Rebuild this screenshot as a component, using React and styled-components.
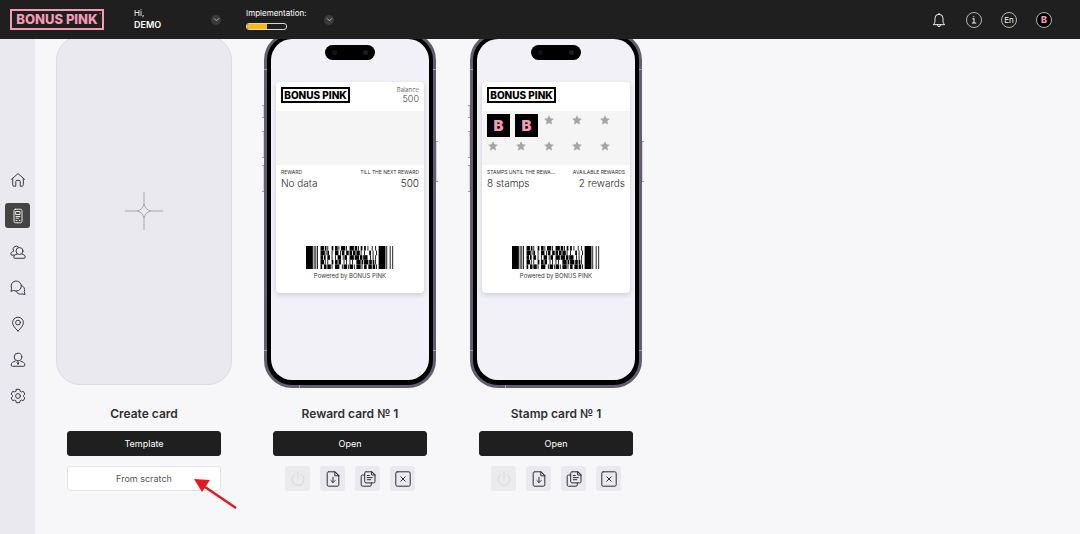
import React from "react";
import styled, { createGlobalStyle, css } from "styled-components";

const GlobalStyle = createGlobalStyle`
  *, *::before, *::after { box-sizing: border-box; }
  body {
    margin: 0;
    background: #f7f7fa;
    color: #2f2f33;
    font-family: Inter, "Liberation Sans", sans-serif;
    overflow-x: hidden;
  }
  button { font: inherit; color: inherit; padding: 0; border: 0; background: none; cursor: pointer; }
  a { color: inherit; text-decoration: none; }
  h2, p, dl, dt, dd, ul { margin: 0; padding: 0; }
  ul { list-style: none; }
`;

/* ---------- header ---------- */

const TopBar = styled.header`
  position: sticky;
  top: 0;
  z-index: 2;
  display: flex;
  align-items: center;
  height: 39px;
  padding: 0 28px 0 10px;
  background: #1f1f1f;
  color: #fff;
`;

const logoSizes = {
  large: css`
    width: 94px;
    height: 21px;
    font-size: 13px;
  `,
  small: css`
    width: 69px;
    height: 16px;
    font-size: 10px;
  `,
};

const LogoBox = styled.span`
  position: relative;
  display: flex;
  align-items: center;
  justify-content: center;
  border: 2px solid currentColor;
  color: ${(p) => p.$color};
  font-weight: 800;
  line-height: 1;
  white-space: nowrap;
  ${(p) => logoSizes[p.$size]}
`;

const TradeMark = styled.sup`
  position: absolute;
  top: 2px;
  right: 1px;
  font-size: 3px;
  line-height: 4px;
`;

const Account = styled.div`
  display: flex;
  align-items: center;
  justify-content: space-between;
  width: ${(p) => p.$width};
  margin-left: ${(p) => p.$gap};
`;

const AccountText = styled.div`
  display: grid;
  gap: ${(p) => p.$gap || "0"};
  padding-bottom: 2px;
  font-size: 8px;
  line-height: 12px;
`;

const AccountName = styled.strong`
  font-size: 9px;
  font-weight: 600;
`;

const Progress = styled.div`
  width: 41px;
  height: 7px;
  border: 1px solid #d8d8d8;
  border-radius: 3px;
`;

const ProgressFill = styled.div`
  height: 100%;
  border-radius: 2px 0 0 2px;
  background: #fdbb12;
`;

const Chevron = styled.button`
  display: grid;
  place-items: center;
  width: 10px;
  height: 10px;
  border-radius: 50%;
  background: #3b3b3b;
  color: #c4c4c4;
`;

const HeaderActions = styled.div`
  display: flex;
  gap: 19px;
  margin-left: auto;
`;

const RoundAction = styled.button`
  display: grid;
  place-items: center;
  width: 16px;
  height: 16px;
  border: ${(p) => (p.$ring ? "1px solid #b4b4b4" : "0")};
  border-radius: 50%;
  background: ${(p) => (p.$dark ? "#000" : "none")};
  color: ${(p) => (p.$dark ? "#f59ab5" : "#f0f0f0")};
  font-size: ${(p) => (p.$dark ? "9px" : "8px")};
  font-weight: ${(p) => (p.$dark ? 800 : 400)};
  line-height: 1;
`;

/* ---------- shell ---------- */

const Shell = styled.div`
  display: grid;
  grid-template-columns: 35px 1fr;
  min-height: calc(100vh - 39px);
`;

const Sidebar = styled.nav`
  display: flex;
  flex-direction: column;
  align-items: center;
  justify-content: center;
  gap: 11px;
  padding-top: 2px;
  background: #e9e9ef;
`;

const NavItem = styled.a`
  display: grid;
  place-items: center;
  width: 25px;
  height: 25px;
  border-radius: 3px;
  background: ${(p) => (p.$active ? "#444" : "none")};
  color: ${(p) => (p.$active ? "#e6e6e6" : "#3a3a42")};
`;

const Main = styled.main`
  display: flex;
  flex-wrap: wrap;
  align-content: flex-start;
  margin-top: -7px;
  padding: 0 6px;
`;

const Column = styled.section`
  display: flex;
  flex-direction: column;
  align-items: center;
  width: 206px;
`;

const Preview = styled.div`
  display: flex;
  justify-content: center;
  width: 100%;
  height: 356px;
`;

const NewCard = styled.button`
  display: grid;
  place-items: center;
  width: 176px;
  height: 349px;
  margin-top: 4px;
  border: 1px solid #dcdce2;
  border-radius: 24px;
  background: #e9e9ef;
`;

const ColumnTitle = styled.h2`
  margin-top: 15px;
  font-size: 12px;
  font-weight: 600;
  line-height: 22px;
`;

const Button = styled.button`
  width: 154px;
  height: 25px;
  margin-top: ${(p) => (p.$light ? "10px" : "6px")};
  border: 1px solid ${(p) => (p.$light ? "#e4e4e8" : "#1f1f1f")};
  border-radius: 3px;
  background: ${(p) => (p.$light ? "#fff" : "#1f1f1f")};
  color: ${(p) => (p.$light ? "#55555a" : "#fff")};
  font-size: 9px;
`;

const Pointed = styled.div`
  position: relative;
`;

const PointerArrow = styled.svg`
  position: absolute;
  top: 21px;
  left: 126px;
  pointer-events: none;
`;

const IconRow = styled.div`
  display: flex;
  gap: 10px;
  margin-top: 10px;
`;

const IconButton = styled.button`
  display: grid;
  place-items: center;
  width: 25px;
  height: 25px;
  border-radius: 3px;
  background: #e9e9ef;
  color: #2e2e34;

  &:disabled {
    background: #ebebed;
    color: #d9d9dc;
  }
`;

/* ---------- phone ---------- */

const Phone = styled.div`
  position: relative;
  width: 172px;
  height: 356px;
  border: 3px solid #645d70;
  border-radius: 28px;
  background: #000;
`;

const PhoneDetails = styled.svg`
  position: absolute;
  top: -3px;
  left: -5px;
  overflow: visible;
`;

const Screen = styled.div`
  display: flex;
  flex-direction: column;
  align-items: center;
  height: calc(100% - 9px);
  margin: 4px 4px 5px;
  padding-top: 6px;
  border-radius: 21px;
  background: #f1f1f7;
`;

const Island = styled.div`
  display: flex;
  align-items: center;
  justify-content: space-between;
  width: 50px;
  height: 15px;
  padding: 0 7px;
  border-radius: 8px;
  background: #000;
`;

const Lens = styled.span`
  width: 5px;
  height: 5px;
  border-radius: 50%;
  background: ${(p) => p.$tone};
`;

const WalletCard = styled.article`
  display: flex;
  flex-direction: column;
  width: 148px;
  height: 211px;
  margin-top: 22px;
  border-radius: 4px;
  background: #fff;
  box-shadow: 0 2px 5px rgba(40, 40, 70, 0.18);
`;

const CardHead = styled.div`
  display: flex;
  justify-content: space-between;
  height: 29px;
  padding: 5px 5px 0;
`;

const Balance = styled.dl`
  color: #3c3c3c;
  text-align: right;
  font-size: 9px;
  font-weight: 300;
  line-height: 11px;

  dt { font-size: 6px; line-height: 6px; }
`;

const Strip = styled.div`
  height: 54px;
  padding: 3px 0 0 5px;
  background: #f5f5f5;
`;

const Stamps = styled.ul`
  display: grid;
  grid-template-columns: repeat(5, 28px);
  grid-auto-rows: 26px;
`;

const Stamp = styled.li`
  display: grid;
  place-items: center;
  width: 23px;
  height: 23px;
  background: #000;
  color: #f59ab5;
  font-size: 15px;
  font-weight: 900;
  line-height: 1;
`;

const EmptyStamp = styled.li`
  padding: 1px;
  line-height: 0;
`;

const Fields = styled.dl`
  display: flex;
  justify-content: space-between;
  padding: 4px 5px 0;
  white-space: nowrap;
`;

const Field = styled.div`
  text-align: ${(p) => p.$align || "left"};

  dt { font-size: 5px; line-height: 6px; }
  dd { color: #2c2c2c; font-size: 10px; font-weight: 300; line-height: 16px; }
`;

const CodeBlock = styled.div`
  display: flex;
  flex-direction: column;
  align-items: center;
  gap: 3px;
  margin-top: auto;
  padding-bottom: 13px;
  color: #3c3c3c;
  font-size: 6px;
  line-height: 8px;
`;

/* ---------- drawings ---------- */

const Glyph = ({ size = 16, children, width = 1 }) => (
  <svg width={size} height={size} viewBox="0 0 16 16" fill="none" stroke="currentColor"
    strokeWidth={width} strokeLinecap="round" strokeLinejoin="round" aria-hidden="true">
    {children}
  </svg>
);

const icons = {
  bell: (
    <>
      <path d="M2.600 12.400c1-1 1.400-2 1.400-3.700V6.300a4 4 0 0 1 8 0v2.400c0 1.700.4 2.700 1.400 3.700z" />
      <path d="M6.600 12.600v.6a1.400 1.400 0 0 0 2.800 0v-.6M7.200 2.300a.8.8 0 0 1 1.600 0" />
    </>
  ),
  info: <path d="M6.500 6.500H8v5M6 11.500h4M7.800 4v.3" />,
  home: <path d="M1.500 7.300 8 1.600l6.500 5.700M2.700 6.500v6.300c0 .8.4 1.400 1.300 1.400h1.800V9.500c0-.8.4-1.200 1.200-1.200h2c.8 0 1.200.4 1.200 1.200v4.700H12c.9 0 1.300-.6 1.300-1.400V6.500" />,
  cards: (
    <>
      <rect x="4" y="1.200" width="8" height="13.600" rx="1.400" />
      <path d="M6 3.500h4v3H6zM6 8.500h4M6 10.200h2.500M9.300 12.500h.7M6 12.500h1" />
    </>
  ),
  people: (
    <>
      <circle cx="9.500" cy="7" r="3.500" />
      <path d="M6.800 10.200c-1.800.2-3 1.400-3 2.900 0 .8.4 1.200 1.100 1.200h9.200c.7 0 1.100-.4 1.100-1.200 0-1.500-1.200-2.700-3-2.900" />
      <path d="M8.900 3.400A3.200 3.200 0 1 0 3.700 7.200C2 7.600.8 8.600.8 10c0 .7.4 1.100 1 1.100h2.600" />
    </>
  ),
  chat: (
    <>
      <path d="m1 11 .6-2.700A5.100 5.100 0 1 1 4 10.700z" />
      <path d="M11.300 5.400a4.500 4.500 0 0 1 3 6.100l.7 3-3-.6a4.600 4.600 0 0 1-6-2.900" />
    </>
  ),
  pin: (
    <>
      <path d="M8 15C5 12 2.600 9.500 2.600 6.600a5.400 5.400 0 0 1 10.800 0C13.400 9.500 11 12 8 15z" />
      <circle cx="8" cy="6.600" r="2.400" />
    </>
  ),
  manager: (
    <>
      <circle cx="8" cy="5" r="3.800" />
      <path d="M5.200 9.200C3 9.600 1.100 11 1.100 13c0 .7.400 1.300 1.300 1.300h11.200c.9 0 1.300-.6 1.300-1.300 0-2-1.900-3.400-4.100-3.800M8 9.800l.8 1L8 12.500l-.8-1.700z" />
    </>
  ),
  gear: (
    <>
      <path d="M6.400 1.300h3.200l.5 1.900 1.300.7 1.900-.5 1.600 2.700L13.500 7.400v1.200l1.400 1.300-1.600 2.700-1.900-.5-1.300.7-.5 1.900H6.400l-.5-1.900-1.300-.7-1.900.5-1.600-2.700 1.400-1.300V7.400L1.100 6.100l1.600-2.700 1.900.5 1.300-.7z" />
      <circle cx="8" cy="8" r="2.400" />
    </>
  ),
  power: <path d="M8 1.500v6.500M4.800 3.300a6 6 0 1 0 6.400 0" />,
  download: (
    <>
      <path d="M3.600.8h6.200l4 4v9c0 .9-.5 1.400-1.400 1.400H3.600c-.9 0-1.400-.5-1.400-1.400V2.200c0-.9.500-1.400 1.400-1.400M9.800.8v4h4z" />
      <path d="M8 6.300v5.200M5.900 9.500 8 11.600l2.100-2.100" />
    </>
  ),
  copy: (
    <>
      <path d="M6 .8h5.600L15 4v6.600c0 .8-.5 1.300-1.300 1.300H6c-.8 0-1.300-.5-1.300-1.300V2.100C4.700 1.300 5.200.8 6 .8M11.600.8V4H15z" />
      <path d="M4.700 4H2.500c-.8 0-1.300.5-1.300 1.300v8.600c0 .8.500 1.300 1.300 1.300H10c.8 0 1.300-.5 1.300-1.300v-2M7.300 4.500h2M7.300 6.600h5M7.300 8.700h3.500" />
    </>
  ),
  remove: (
    <>
      <rect x=".8" y=".8" width="14.400" height="14.400" rx="1.400" />
      <path d="m5.800 5.800 4.400 4.400m0-4.400-4.400 4.400" />
    </>
  ),
  chevron: <path d="m3 6 5 5 5-5" />,
};

const Logo = ({ size, color }) => (
  <LogoBox $size={size} $color={color}>
    BONUS PINK<TradeMark>™</TradeMark>
  </LogoBox>
);

/* bar and gap widths, in modules, of each row's code words */
const codeRows = [
  ["41211422", "31125113", "51311222", "22141313"],
  ["51112313", "42113231", "31314112", "15221312"],
  ["31223213", "12421133", "51513112", "43121212"],
  ["41121422", "31331214", "12145121", "51312112"],
  ["22314113", "53114111", "41125112", "32413111"],
];

const guardBars = [
  [0, 8], [9, 1], [11, 1], [13, 1], [85, 8], [94, 1], [98, 1], [101, 1],
];

const Barcode = () => {
  const unit = 88 / 103;
  const height = 23 / codeRows.length;
  const bars = guardBars.map(([x, w]) => (
    <rect key={`guard-${x}`} x={x * unit} y="0" width={w * unit} height="23" />
  ));
  codeRows.forEach((words, row) => {
    words.forEach((word, n) => {
      let x = 17 + n * 17;
      [...word].forEach((digit, i) => {
        const w = Number(digit);
        const end = Math.min(x + w, 34 + n * 17);
        if (i % 2 === 0 && end > x) {
          bars.push(
            <rect key={`${row}-${n}-${i}`} x={x * unit} y={row * height} width={(end - x) * unit} height={height} />
          );
        }
        x += w;
      });
    });
  });
  return (
    <svg width="88" height="23" viewBox="0 0 88 23" role="img" aria-label="Card barcode">{bars}</svg>
  );
};

const Star = () => (
  <svg width="10" height="10" viewBox="0 0 10 10" aria-label="Empty stamp">
    <path fill="#a6a6a6" d="m5 .2 1.500 3.100 3.400.4-2.500 2.400.6 3.500L5 7.900 2 9.600l.6-3.500L.1 3.700l3.400-.4z" />
  </svg>
);

const PhoneFrame = ({ children }) => (
  <Phone>
    <Screen>
      <Island><Lens $tone="#10131a" /><Lens $tone="#171c26" /></Island>
      {children}
    </Screen>
    <PhoneDetails width="176" height="356" viewBox="0 0 176 356" aria-hidden="true">
      <path stroke="#d3d0da" d="M1.500 73v12M1.500 99v26M1.500 133v26M174.500 109v40" />
      <path fill="#a29cab" d="M0 73h2v1H0zM0 85h2v1H0zM0 99h2v1H0zM0 125h2v1H0zM0 133h2v1H0zM0 159h2v1H0zM174 109h2v1h-2zM174 149h2v1h-2z" />
      <path fill="#a7a2b0" d="M2 37h3v1H2zM171 37h3v1h-3zM2 318h3v1H2zM171 318h3v1h-3zM37 353h1v3h-1z" />
    </PhoneDetails>
  </Phone>
);

const CardFields = ({ fields }) => (
  <Fields>
    {fields.map(([label, value], i) => (
      <Field key={label} $align={i ? "right" : "left"}>
        <dt>{label}</dt>
        <dd>{value}</dd>
      </Field>
    ))}
  </Fields>
);

const CardColumn = ({ title, balance, stamps, fields }) => (
  <Column>
    <Preview>
      <PhoneFrame>
        <WalletCard>
          <CardHead>
            <Logo size="small" color="#000" />
            {balance && <Balance><dt>Balance</dt><dd>{balance}</dd></Balance>}
          </CardHead>
          <Strip>
            {stamps && (
              <Stamps>
                {Array.from({ length: 10 }, (_, i) =>
                  i < stamps ? <Stamp key={i}>B</Stamp> : <EmptyStamp key={i}><Star /></EmptyStamp>
                )}
              </Stamps>
            )}
          </Strip>
          <CardFields fields={fields} />
          <CodeBlock>
            <Barcode />
            <p>Powered by BONUS PINK</p>
          </CodeBlock>
        </WalletCard>
      </PhoneFrame>
    </Preview>
    <ColumnTitle>{title}</ColumnTitle>
    <Button>Open</Button>
    <IconRow>
      <IconButton disabled aria-label="Activate"><Glyph>{icons.power}</Glyph></IconButton>
      <IconButton aria-label="Download"><Glyph>{icons.download}</Glyph></IconButton>
      <IconButton aria-label="Duplicate"><Glyph>{icons.copy}</Glyph></IconButton>
      <IconButton aria-label="Delete"><Glyph>{icons.remove}</Glyph></IconButton>
    </IconRow>
  </Column>
);

const navigation = [
  ["home", "Home"],
  ["cards", "Cards"],
  ["people", "Clients"],
  ["chat", "Messages"],
  ["pin", "Locations"],
  ["manager", "Managers"],
  ["gear", "Settings"],
];

export default function App() {
  const implementation = 52;
  return (
    <>
      <GlobalStyle />
      <TopBar>
        <a href="#home"><Logo size="large" color="#f59ab5" /></a>
        <Account $width="87px" $gap="30px">
          <AccountText>
            <span>Hi,</span>
            <AccountName>DEMO</AccountName>
          </AccountText>
          <Chevron aria-label="Account menu"><Glyph size={7} width={2}>{icons.chevron}</Glyph></Chevron>
        </Account>
        <Account $width="88px" $gap="25px">
          <AccountText $gap="4px">
            <span>Implementation:</span>
            <Progress role="progressbar" aria-label="Implementation" aria-valuenow={implementation}>
              <ProgressFill style={{ width: `${implementation}%` }} />
            </Progress>
          </AccountText>
          <Chevron aria-label="Implementation steps"><Glyph size={7} width={2}>{icons.chevron}</Glyph></Chevron>
        </Account>
        <HeaderActions>
          <RoundAction aria-label="Notifications"><Glyph>{icons.bell}</Glyph></RoundAction>
          <RoundAction $ring aria-label="Information"><Glyph size={14} width={1.2}>{icons.info}</Glyph></RoundAction>
          <RoundAction $ring>En</RoundAction>
          <RoundAction $ring $dark>B</RoundAction>
        </HeaderActions>
      </TopBar>
      <Shell>
        <Sidebar aria-label="Main">
          {navigation.map(([icon, label]) => (
            <NavItem key={icon} href={`#${icon}`} aria-label={label} $active={icon === "cards"}>
              <Glyph>{icons[icon]}</Glyph>
            </NavItem>
          ))}
        </Sidebar>
        <Main>
          <Column>
            <Preview>
              <NewCard aria-label="Create card">
                <svg width="38" height="38" viewBox="0 0 38 38" fill="none" stroke="#a5a5ab" aria-hidden="true">
                  <path d="M19 0v12M19 26v12M0 19h12M26 19h12M19 12c1 4 3 6 7 7-4 1-6 3-7 7-1-4-3-6-7-7 4-1 6-3 7-7z" />
                </svg>
              </NewCard>
            </Preview>
            <ColumnTitle>Create card</ColumnTitle>
            <Button>Template</Button>
            <Pointed>
              <Button $light>From scratch</Button>
              <PointerArrow width="46" height="34" viewBox="0 0 46 34" aria-hidden="true">
                <path d="M12 10 43 31" stroke="#e5191f" strokeWidth="2.5" />
                <path d="m1 2 16 1-8 12z" fill="#e5191f" />
              </PointerArrow>
            </Pointed>
          </Column>
          <CardColumn
            title="Reward card № 1"
            balance="500"
            fields={[["REWARD", "No data"], ["TILL THE NEXT REWARD", "500"]]}
          />
          <CardColumn
            title="Stamp card № 1"
            stamps={2}
            fields={[["STAMPS UNTIL THE REWA…", "8 stamps"], ["AVAILABLE REWARDS", "2 rewards"]]}
          />
        </Main>
      </Shell>
    </>
  );
}
